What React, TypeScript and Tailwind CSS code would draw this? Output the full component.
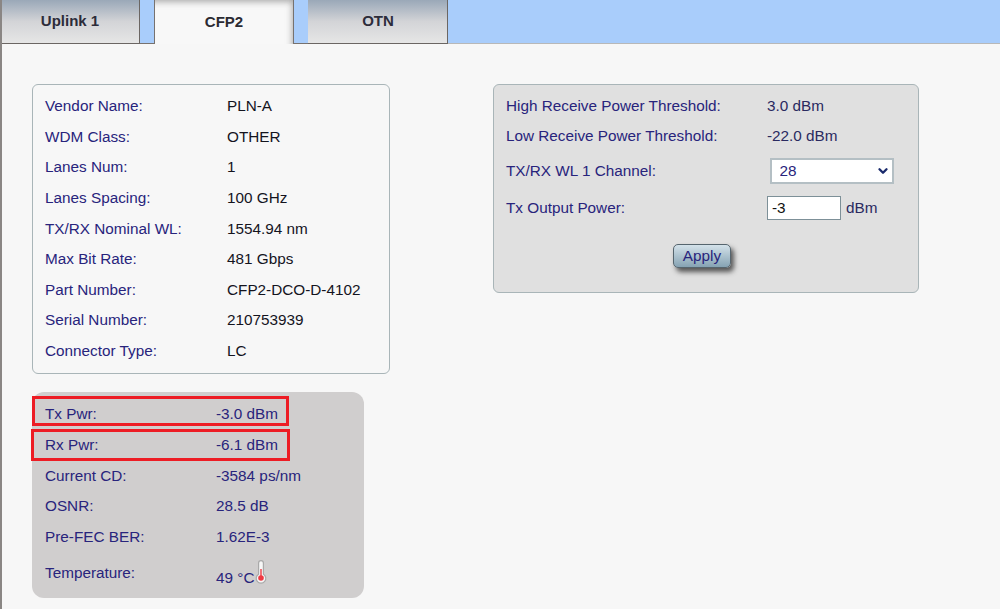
import { ChevronDown } from "lucide-react";

const moduleInfo = [
	["Vendor Name:", "PLN-A"],
	["WDM Class:", "OTHER"],
	["Lanes Num:", "1"],
	["Lanes Spacing:", "100 GHz"],
	["TX/RX Nominal WL:", "1554.94 nm"],
	["Max Bit Rate:", "481 Gbps"],
	["Part Number:", "CFP2-DCO-D-4102"],
	["Serial Number:", "210753939"],
	["Connector Type:", "LC"],
];

const liveStats = [
	["Tx Pwr:", "-3.0 dBm"],
	["Rx Pwr:", "-6.1 dBm"],
	["Current CD:", "-3584 ps/nm"],
	["OSNR:", "28.5 dB"],
	["Pre-FEC BER:", "1.62E-3"],
];

const Tab = ({ label, active }: { label: string; active?: boolean }) => {
	if (active) {
		return (
			<div className="w-[138px] h-[44px] flex items-center justify-center bg-[#f8f8f8] text-[15px] font-bold text-[#2b2b33] shadow-[inset_-7px_8px_6px_-6px_rgba(110,110,110,0.55)]">
				{label}
			</div>
		);
	}
	return (
		<div className="w-[140px] h-[44px] pl-[1px] flex items-center justify-center bg-gradient-to-b from-[#9aa8b8] via-[#d3d4d7] to-[#e6e6e6] border-r border-b border-[#6b6663] text-[15px] font-bold text-[#2c2c3a]">
			{label}
		</div>
	);
};

const Thermometer = () => (
	<svg width="12" height="24" viewBox="0 0 12 24" className="mb-[3px] ml-[1px]">
		<path
			d="M3.6 3a2.4 2.4 0 0 1 4.8 0v11.2a4.8 4.8 0 1 1-4.8 0z"
			fill="#f7f7f7"
			stroke="#a9a9a9"
			strokeWidth="1.2"
		/>
		<rect x="5.3" y="9" width="1.4" height="9" fill="#ee3a43" />
		<circle cx="6" cy="18" r="2.8" fill="#ee3a43" />
	</svg>
);

export default function App() {
	return (
		<div className="w-[1000px] h-[609px] overflow-hidden bg-[#f7f7f7] border-l-2 border-[#8a8684] font-['Liberation_Sans',Arial,sans-serif] text-[15.3px]">
			<div className="h-[44px] -ml-[2px] flex bg-[#a9cdfb]">
				<Tab label="Uplink 1" />
				<div className="w-[15px] border-b border-r border-[#77726f]" />
				<Tab label="CFP2" active />
				<div className="w-[15px] border-l border-b border-[#77726f]" />
				<Tab label="OTN" />
				<div className="flex-1 border-b border-[#b8b8b8]" />
			</div>

			<div className="flex pl-[30px] pt-[40px]">
				<div className="w-[358px]">
					<div className="h-[290px] rounded-[6px] border border-[#a9b5b8] pl-[12px] pt-[6.4px]">
						{moduleInfo.map(([label, value]) => (
							<div key={label} className="h-[30.6px] flex items-center">
								<span className="w-[182px] text-[#28247c]">{label}</span>
								<span className="text-[#14141e]">{value}</span>
							</div>
						))}
					</div>

					<div className="relative w-[332px] h-[206px] mt-[18px] rounded-[12px] bg-[#d0cece] pl-[13px] pt-[7.5px] text-[#28247c]">
						{liveStats.map(([label, value]) => (
							<div key={label} className="h-[30.6px] flex items-center">
								<span className="w-[171px]">{label}</span>
								<span>{value}</span>
							</div>
						))}
						<div className="h-[42px] flex items-center">
							<span className="w-[171px]">Temperature:</span>
							<span className="flex items-end">
								<span className="leading-[18px] pt-[8px]">49 °C</span>
								<Thermometer />
							</span>
						</div>
						<div className="absolute left-0 top-[4px] w-[257px] h-[30px] border-[3px] border-[#ed1c24]" />
						<div className="absolute -left-[1px] top-[37px] w-[259px] h-[32px] border-[3px] border-[#ed1c24]" />
					</div>
				</div>

				<div className="w-[426px] h-[209px] ml-[103px] rounded-[6px] border border-[#a9b5b8] bg-[#e0e0e0] pl-[12px] pt-[6px] text-[#28247c]">
					<div className="h-[30.6px] flex items-center">
						<span className="w-[261px]">High Receive Power Threshold:</span>
						<span className="text-[#2a2a60]">3.0 dBm</span>
					</div>
					<div className="h-[30.6px] flex items-center">
						<span className="w-[261px]">Low Receive Power Threshold:</span>
						<span className="text-[#2a2a60]">-22.0 dBm</span>
					</div>
					<div className="h-[38px] flex items-center">
						<span className="w-[263.5px]">TX/RX WL 1 Channel:</span>
						<div className="relative w-[124px] h-[26px]">
							<select
								defaultValue="28"
								className="w-full h-full appearance-none bg-white border-2 border-[#b4bfc4] pl-[8px] text-[#28247c] outline-none"
							>
								<option value="28">28</option>
							</select>
							<ChevronDown
								size={14}
								strokeWidth={4}
								className="absolute right-[4px] top-[6px] text-[#1a2a6c] pointer-events-none"
							/>
						</div>
					</div>
					<div className="h-[36px] flex items-center">
						<span className="w-[261px]">Tx Output Power:</span>
						<input
							defaultValue="-3"
							className="w-[74px] h-[24px] bg-white border border-[#7d9098] pl-[4px] text-[#111] outline-none"
						/>
						<span className="ml-[5px] text-[#2a2a60]">dBm</span>
					</div>
					<div className="flex pl-[167px] pt-[18px]">
						<button className="w-[58px] h-[24px] rounded-[5px] border border-[#56656e] bg-gradient-to-b from-[#d4e2ea] to-[#86a3b3] text-[#28247c] shadow-[3px_4px_5px_rgba(40,40,40,0.75)]">
							Apply
						</button>
					</div>
				</div>
			</div>
		</div>
	);
}
